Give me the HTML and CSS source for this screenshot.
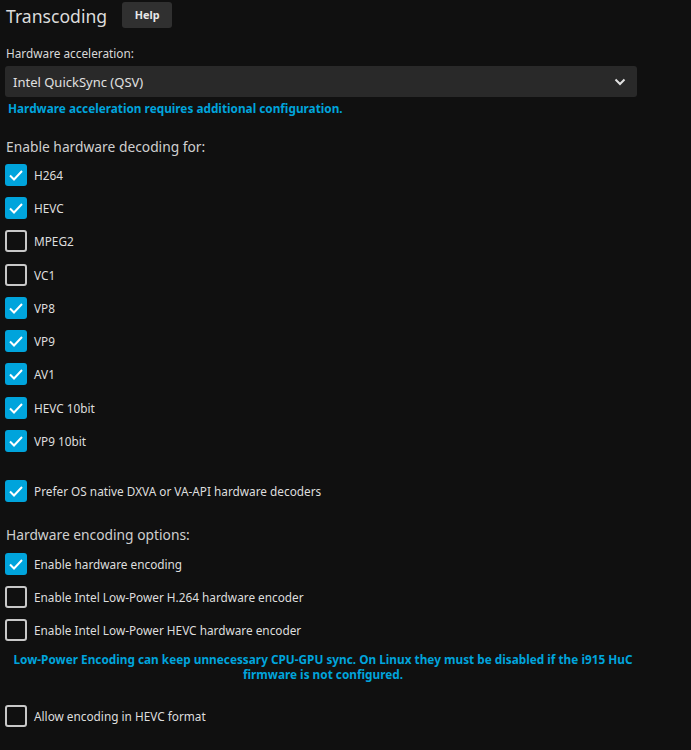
FILE: index.html
```html
<!DOCTYPE html>
<html lang="en">
<head>
    <meta charset="UTF-8">
    <title>Transcoding</title>
    <link rel="stylesheet" href="styles.css">
</head>
<body>
    <div class="page">
        <div class="section-header">
            <h2>Transcoding</h2>
            <button class="help-btn">Help</button>
        </div>

        <div class="select-group">
            <label class="select-label">Hardware acceleration:</label>
            <div class="select-box">
                <span>Intel QuickSync (QSV)</span>
                <svg class="chevron" width="12" height="8" viewBox="0 0 12 8"><path d="M1.5 1.5 L6 6 L10.5 1.5" fill="none" stroke="#e0e0e0" stroke-width="2"/></svg>
            </div>
            <div class="field-desc">Hardware acceleration requires additional configuration.</div>
        </div>

        <h3 class="group-title">Enable hardware decoding for:</h3>
        <div class="checkbox-list">
            <div class="check-row"><span class="box checked"><svg viewBox="0 0 22 22"><path d="M5 11.5 L9 15.5 L17 7" /></svg></span>H264</div>
            <div class="check-row"><span class="box checked"><svg viewBox="0 0 22 22"><path d="M5 11.5 L9 15.5 L17 7" /></svg></span>HEVC</div>
            <div class="check-row"><span class="box"></span>MPEG2</div>
            <div class="check-row"><span class="box"></span>VC1</div>
            <div class="check-row"><span class="box checked"><svg viewBox="0 0 22 22"><path d="M5 11.5 L9 15.5 L17 7" /></svg></span>VP8</div>
            <div class="check-row"><span class="box checked"><svg viewBox="0 0 22 22"><path d="M5 11.5 L9 15.5 L17 7" /></svg></span>VP9</div>
            <div class="check-row"><span class="box checked"><svg viewBox="0 0 22 22"><path d="M5 11.5 L9 15.5 L17 7" /></svg></span>AV1</div>
            <div class="check-row"><span class="box checked"><svg viewBox="0 0 22 22"><path d="M5 11.5 L9 15.5 L17 7" /></svg></span>HEVC 10bit</div>
            <div class="check-row"><span class="box checked"><svg viewBox="0 0 22 22"><path d="M5 11.5 L9 15.5 L17 7" /></svg></span>VP9 10bit</div>
        </div>

        <div class="checkbox-list spaced">
            <div class="check-row"><span class="box checked"><svg viewBox="0 0 22 22"><path d="M5 11.5 L9 15.5 L17 7" /></svg></span>Prefer OS native DXVA or VA-API hardware decoders</div>
        </div>

        <h3 class="group-title enc">Hardware encoding options:</h3>
        <div class="checkbox-list enc-list">
            <div class="check-row"><span class="box checked"><svg viewBox="0 0 22 22"><path d="M5 11.5 L9 15.5 L17 7" /></svg></span>Enable hardware encoding</div>
            <div class="check-row"><span class="box"></span>Enable Intel Low-Power H.264 hardware encoder</div>
            <div class="check-row"><span class="box"></span>Enable Intel Low-Power HEVC hardware encoder</div>
        </div>
        <div class="note">Low-Power Encoding can keep unnecessary CPU-GPU sync. On Linux they must be disabled if the i915 HuC firmware is not configured.</div>

        <div class="checkbox-list">
            <div class="check-row"><span class="box"></span>Allow encoding in HEVC format</div>
        </div>
    </div>
</body>
</html>
```

FILE: styles.css
```css
html, body {
    margin: 0;
    background: #101010;
}

body {
    font-family: "Noto Sans", sans-serif;
    color: #e0e0e0;
}

.page {
    width: 636px;
    padding: 0 0 0 5px;
}

.section-header {
    display: flex;
    align-items: center;
    height: 32px;
}

.section-header h2 {
    margin: 0 0 0 1px;
    font-size: 17.6px;
    font-weight: 400;
    color: #dcdcdc;
}

.help-btn {
    margin-left: 15px;
    width: 50px;
    height: 26px;
    margin-top: -3px;
    background: #303030;
    border: none;
    border-radius: 3px;
    color: #e8e8e8;
    font-family: "Noto Sans", sans-serif;
    font-weight: 700;
    font-size: 10.8px;
    padding: 0;
}

.select-group {
    margin-top: 12px;
}

.select-label {
    display: block;
    font-size: 11.8px;
    color: #d8d8d8;
    line-height: 19px;
    margin-left: 1px;
}

.select-box {
    margin-top: 3px;
    width: 632px;
    height: 31px;
    background: #292929;
    border-radius: 3px;
    display: flex;
    align-items: center;
    justify-content: space-between;
    padding: 0 8px;
    box-sizing: border-box;
    font-size: 13px;
    color: #e0e0e0;
}

.chevron {
    margin-right: 3px;
}

.field-desc {
    margin: 2px 0 0 3px;
    font-size: 11.8px;
    font-weight: 700;
    color: #00a4dc;
    line-height: 18px;
}

.group-title {
    margin: 20px 0 0 1px;
    font-size: 13.8px;
    font-weight: 400;
    color: #cfcfcf;
    line-height: 20px;
}

.group-title.enc {
    margin-top: 17px;
}

.checkbox-list {
    margin-top: 1px;
}

.checkbox-list.enc-list {
    margin-top: 2px;
}

.checkbox-list.spaced {
    margin-top: 17px;
}

.check-row {
    display: flex;
    align-items: center;
    height: 33.3px;
    font-size: 11.8px;
    color: #dedede;
}

.box {
    width: 22px;
    height: 22px;
    box-sizing: border-box;
    border: 2px solid #c8c8c8;
    border-radius: 3px;
    margin-right: 7px;
    flex: none;
}

.box.checked {
    background: #00a4dc;
    border: none;
}

.box svg {
    display: block;
    width: 22px;
    height: 22px;
}

.box svg path {
    fill: none;
    stroke: #fff;
    stroke-width: 2;
}

.note {
    margin: 5px 0 17px;
    text-align: center;
    font-size: 11.8px;
    font-weight: 700;
    color: #00a4dc;
    line-height: 15px;
}
```
